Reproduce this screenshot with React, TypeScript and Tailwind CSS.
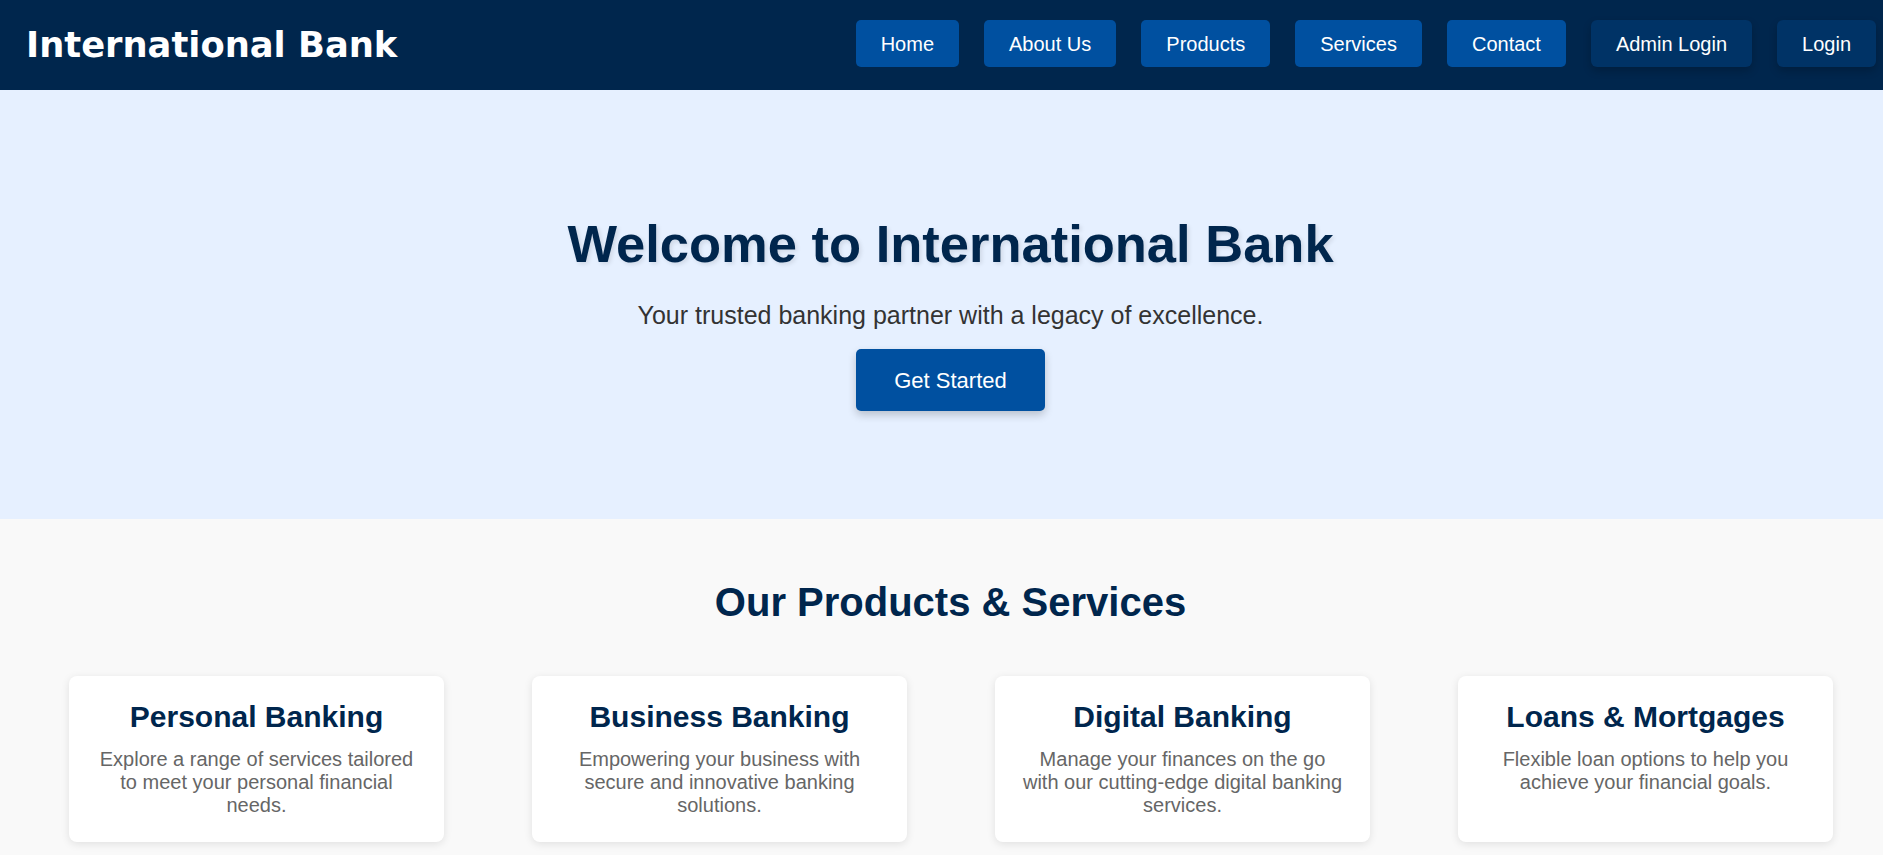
import React from "react";

type Product = {
  title: string;
  text: string;
};

const navLinks = ["Home", "About Us", "Products", "Services", "Contact"];

const products: Product[] = [
  {
    title: "Personal Banking",
    text: "Explore a range of services tailored to meet your personal financial needs.",
  },
  {
    title: "Business Banking",
    text: "Empowering your business with secure and innovative banking solutions.",
  },
  {
    title: "Digital Banking",
    text: "Manage your finances on the go with our cutting-edge digital banking services.",
  },
  {
    title: "Loans & Mortgages",
    text: "Flexible loan options to help you achieve your financial goals.",
  },
];

export default function App() {
  return (
    <div className="min-h-screen bg-[#f9f9f9] font-['Liberation_Sans',Arial,sans-serif]">
      <header className="flex h-[90px] items-center justify-between bg-[#00264d] pl-[26px] pr-[7px]">
        <h1 className="font-['Verdana','DejaVu_Sans',sans-serif] text-[35.3px] font-bold text-white">
          International Bank
        </h1>

        <nav className="-mt-[3px] flex items-center gap-[25px]">
          {navLinks.map((link) => (
            <a
              key={link}
              href="#"
              className="flex h-[47px] items-center rounded-[5px] bg-[#0050a0] px-[25px] text-[20px] text-white"
            >
              {link}
            </a>
          ))}
          <button className="h-[47px] rounded-[6px] bg-[#003366] px-[25px] text-[20px] text-white shadow-[0_4px_8px_rgba(0,0,0,0.2)]">
            Admin Login
          </button>
          <button className="h-[47px] rounded-[6px] bg-[#003366] px-[25px] text-[20px] text-white shadow-[0_4px_8px_rgba(0,0,0,0.2)]">
            Login
          </button>
        </nav>
      </header>

      <section className="flex flex-col items-center bg-[#e6f0ff] pb-[108px] pl-[18px] pt-[124px] text-center">
        <h2 className="text-[52.5px] font-bold leading-[60px] text-[#00264d] [text-shadow:2px_2px_4px_rgba(0,0,0,0.1)]">
          Welcome to International Bank
        </h2>
        <p className="mt-[27px] text-[25px] leading-[29px] text-[#333]">
          Your trusted banking partner with a legacy of excellence.
        </p>
        <button className="mt-[19px] h-[62px] rounded-[5px] bg-[#0050a0] px-[38px] text-[22px] text-white shadow-[0_4px_8px_rgba(0,0,0,0.2)]">
          Get Started
        </button>
      </section>

      <section className="pb-[40px] pt-[60px]">
        <h2 className="pl-[18px] text-center text-[40px] font-bold leading-[46px] text-[#00264d]">
          Our Products &amp; Services
        </h2>

        <div className="mt-[51px] flex gap-[88px] pl-[69px]">
          {products.map((item) => (
            <div
              key={item.title}
              className="w-[375px] rounded-[8px] bg-white px-[25px] pb-[25px] pt-[24px] text-center shadow-[0_2px_8px_rgba(0,0,0,0.1)]"
            >
              <h3 className="text-[30px] font-bold leading-[34px] text-[#00264d]">
                {item.title}
              </h3>
              <p className="mt-[14px] text-[20px] leading-[23px] text-[#666]">
                {item.text}
              </p>
            </div>
          ))}
        </div>
      </section>
    </div>
  );
}
